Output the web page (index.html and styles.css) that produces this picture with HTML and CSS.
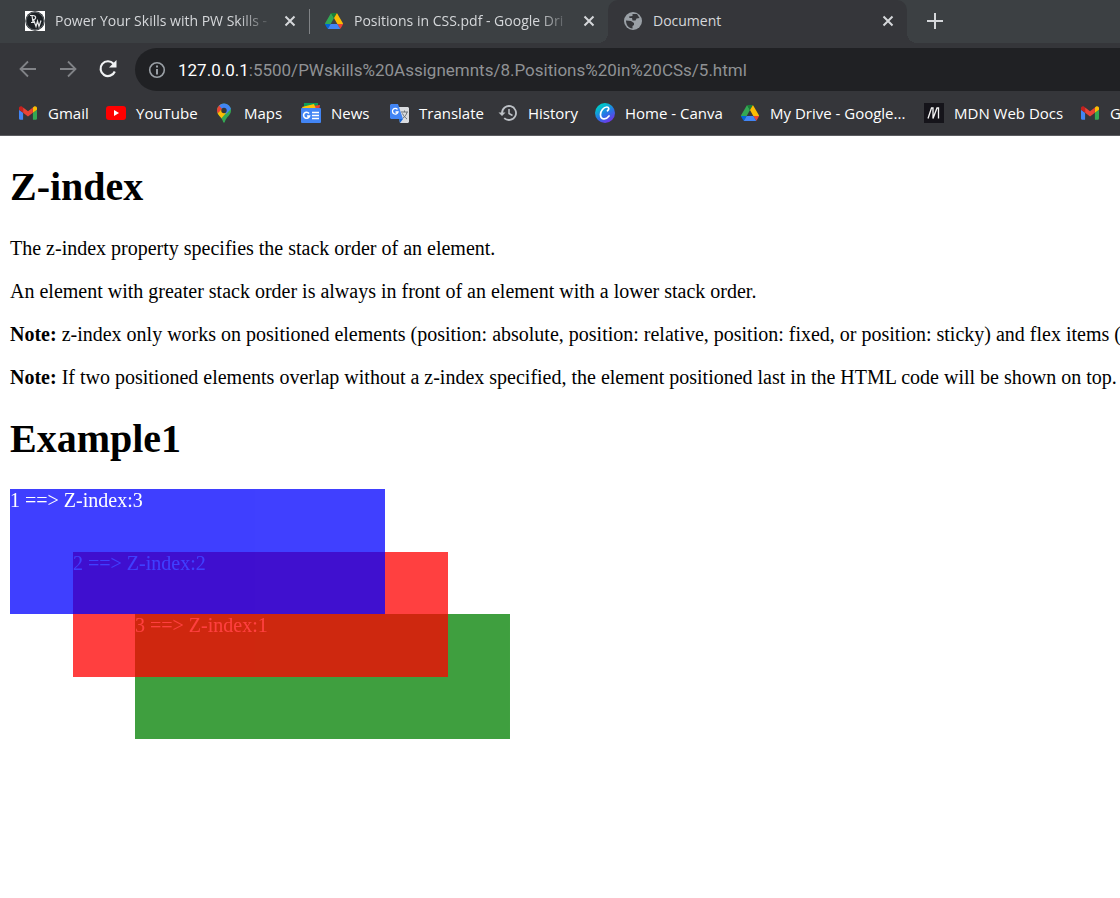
FILE: index.html
```html
<!DOCTYPE html>
<html lang="en">
<head>
<meta charset="utf-8">
<title>Document</title>
<link rel="stylesheet" href="styles.css">
</head>
<body>
<svg class="defs" aria-hidden="true">
  <symbol id="close" viewBox="0 0 12 12"><path d="M1.5 1.5l9 9M10.5 1.5l-9 9" fill="none" stroke="currentColor" stroke-width="2"/></symbol>
  <symbol id="drive" viewBox="0 0 87.3 78">
    <path d="M6.6 66.85l3.85 6.65c.8 1.4 1.95 2.5 3.3 3.3L27.5 53H0c0 1.55.4 3.1 1.2 4.5z" fill="#0066da"/>
    <path d="M43.65 25L29.9 1.2c-1.35.8-2.5 1.9-3.3 3.3L1.2 48.5A9.06 9.06 0 0 0 0 53h27.5z" fill="#34a853"/>
    <path d="M73.55 76.8c1.35-.8 2.5-1.9 3.3-3.3l1.6-2.75 7.65-13.25c.8-1.4 1.2-2.95 1.2-4.5H59.8l5.85 11.5z" fill="#ea4335"/>
    <path d="M43.65 25L57.4 1.2C56.05.4 54.5 0 52.9 0H34.4c-1.6 0-3.15.45-4.5 1.2z" fill="#188038"/>
    <path d="M59.8 53H27.5L13.75 76.8c1.35.8 2.9 1.2 4.5 1.2h50.8c1.6 0 3.15-.45 4.5-1.2z" fill="#4285f4"/>
    <path d="M73.4 26.5L60.7 4.5c-.8-1.4-1.95-2.5-3.3-3.3L43.65 25 59.8 53h27.45c0-1.55-.4-3.1-1.2-4.5z" fill="#fbbc04"/>
  </symbol>
  <symbol id="gmail" viewBox="52 42 88 66">
    <path d="M58 108h14V74L52 59v43c0 3.3 2.7 6 6 6" fill="#4285f4"/>
    <path d="M120 108h14c3.3 0 6-2.7 6-6V59l-20 15" fill="#34a853"/>
    <path d="M120 48v26l20-15v-8c0-7.4-8.5-11.7-14.4-7.2" fill="#fbbc04"/>
    <path d="M72 74V48l24 18 24-18v26L96 92" fill="#ea4335"/>
    <path d="M52 51v8l20 15V48l-5.6-4.2C60.5 39.4 52 43.600 52 51" fill="#c5221f"/>
  </symbol>
</svg>

<header class="browser">
  <nav class="tabs" aria-label="Tabs">
    <div class="tab">
      <svg class="icon" viewBox="0 0 20 20"><path d="M0 0h20v20H0z" fill="#fff"/><circle cx="10" cy="10" r="9.700" fill="#1b2024"/><circle cx="10" cy="10" r="8.800" fill="none" stroke="#8b9093" stroke-width=".6"/><path d="M5 4.500h3c3.500 0 3.500 4.500 0 4M7 4.500l1 7M6 11.500h3.500M8.500 8.500l2.500 7 1.500-5.500 1.500 5.500 2-6" fill="none" stroke="#e4e6e7" stroke-width="1.200"/></svg>
      <span class="tab-title faded">Power Your Skills with PW Skills -</span>
      <button class="close" aria-label="Close tab"><svg><use href="#close"/></svg></button>
    </div>
    <div class="tab divided">
      <svg class="icon drive-icon"><use href="#drive"/></svg>
      <span class="tab-title faded">Positions in CSS.pdf - Google Dri</span>
      <button class="close" aria-label="Close tab"><svg><use href="#close"/></svg></button>
    </div>
    <div class="tab active">
      <svg class="icon" viewBox="0 0 20 20"><circle cx="10" cy="10" r="9" fill="#9aa0a6"/><path d="M9.500 3H14l2.500 4-3 .5-1 2H9.500L9 7H6.500l-.5-1.500 3.500-.5zM3 9.500l5 .5 3 2v2l-1.500 1v2.500C5.500 17 3 14 3 9.500z" fill="#35363a"/></svg>
      <span class="tab-title">Document</span>
      <button class="close" aria-label="Close tab"><svg><use href="#close"/></svg></button>
    </div>
    <button class="new-tab" aria-label="New tab"><svg viewBox="0 0 16 16"><path d="M8 0v16M0 8h16" stroke="currentColor" stroke-width="2"/></svg></button>
  </nav>

  <div class="toolbar">
    <button class="nav-button" aria-label="Back"><svg viewBox="0 0 20 20"><path d="M18 10H3M10 2.500L2.500 10l7.500 7.500" fill="none" stroke="#818387" stroke-width="1.800"/></svg></button>
    <button class="nav-button" aria-label="Forward"><svg viewBox="0 0 20 20"><path d="M2 10h15M10 2.500l7.500 7.500-7.500 7.500" fill="none" stroke="#818387" stroke-width="1.800"/></svg></button>
    <button class="nav-button" aria-label="Reload"><svg viewBox="0 0 20 20"><path d="M16.800 12.500A7.400 7.400 0 1 1 15.500 4.700" fill="none" stroke="#f1f3f4" stroke-width="2.200"/><path d="M18.500 1v7.500H11z" fill="#f1f3f4"/></svg></button>
    <div class="address">
      <svg viewBox="0 0 18 18"><circle cx="9" cy="9" r="7.300" fill="none" stroke="#9aa0a6" stroke-width="1.600"/><path d="M9 4.500v2M9 8v5.500" stroke="#9aa0a6" stroke-width="2"/></svg>
      <span class="url"><span class="host">127.0.0.1</span>:5500/PWskills%20Assignemnts/8.Positions%20in%20CSs/5.html</span>
    </div>
  </div>

  <nav class="bookmarks" aria-label="Bookmarks">
    <a href="#"><svg class="icon gmail-icon"><use href="#gmail"/></svg>Gmail</a>
    <a href="#"><svg class="icon" viewBox="0 0 20 20"><rect y="3" width="20" height="14" rx="3" fill="#f00"/><path d="M8 7v6l5-3z" fill="#fff"/></svg>YouTube</a>
    <a href="#"><svg class="icon" viewBox="0 0 20 20"><clipPath id="pin"><path d="M10 .5a7 7 0 0 0-7 7c0 5 4.500 5.500 6.200 11.500.3 1 1.300 1 1.600 0C12.500 13 17 12.500 17 7.500a7 7 0 0 0-7-7z"/></clipPath><g clip-path="url(#pin)"><path d="M0 0h20v20H0z" fill="#34a853"/><path d="M0 14L8 5l5 4-8 9z" fill="#fbbc04"/><path d="M0 0h6L9 5l-5 5H0z" fill="#ea4335"/><path d="M5 2.500L8 0h12v3l-8 8-3-4z" fill="#4285f4"/></g><circle cx="10" cy="7.500" r="2.700" fill="#35363a"/></svg>Maps</a>
    <a href="#"><svg class="icon" viewBox="0 0 20 20"><path d="M3 0h14v7H3z" fill="#0c9d58"/><path d="M12 3l7-1-1 6h-7z" fill="#ea4335"/><path d="M1 4l12-3 2 5H2z" fill="#ffc107"/><rect y="5" width="20" height="15" rx="1" fill="#4285f4"/><path d="M8 10.500a3 3 0 1 0 .5 2.500H6M11 9.500h7M11 12.500h7M11 15.500h7" fill="none" stroke="#fff" stroke-width="1.600"/></svg>News</a>
    <a href="#"><svg class="icon" viewBox="0 0 20 20"><path d="M8 4h11l1 1v14l-1 1h-8z" fill="#dadce0"/><path d="M12 9h7M15.500 7.500V9M18 9c-.5 3-2.500 5-4.500 6.500M13.500 10.500c1 2.500 3 4.500 4.500 5.500" fill="none" stroke="#6b7379"/><path d="M2 1h7l5 15H2l-1-1V2z" fill="#4285f4"/><path d="M10 16h4l-3 4z" fill="#1967d2"/><path d="M8.500 6.500A2.800 2.800 0 1 0 9 9H6.500" fill="none" stroke="#fff" stroke-width="1.300"/></svg>Translate</a>
    <a href="#"><svg class="icon" viewBox="0 0 20 20"><path d="M4 10a7 7 0 1 1 2.200 5.100" fill="none" stroke="#bdc1c6" stroke-width="1.800"/><path d="M.5 9.500h7L4 13z" fill="#bdc1c6"/><path d="M11 6v4.500l3.500 2" fill="none" stroke="#bdc1c6" stroke-width="1.500"/></svg>History</a>
    <a href="#"><svg class="icon" viewBox="0 0 20 20"><defs><linearGradient id="canva" x1=".2" y1="0" x2=".8" y2="1"><stop offset=".15" stop-color="#00c4cc"/><stop offset=".55" stop-color="#2874e6"/><stop offset="1" stop-color="#7d2ae8"/></linearGradient></defs><circle cx="10" cy="10" r="10" fill="url(#canva)"/><path d="M12.500 7.800c2-1.500 1.500-3.800-.6-3.800C8.500 4 5.500 8 5.500 11.500c0 5.500 5.500 5.500 8.500 1.500" fill="none" stroke="#fff" stroke-width="1.700" stroke-linecap="round"/></svg>Home - Canva</a>
    <a href="#"><svg class="icon drive-icon"><use href="#drive"/></svg>My Drive - Google...</a>
    <a href="#"><svg class="icon" viewBox="0 0 20 20"><path d="M0 0h20v20H0z" fill="#15141a"/><path d="M4 15.500L7.500 5h1.500v10.500L13 5h1.500v10.500" fill="none" stroke="#f4f4f4" stroke-width="1.300"/></svg>MDN Web Docs</a>
    <a href="#"><svg class="icon gmail-icon"><use href="#gmail"/></svg>G</a>
  </nav>
</header>

<main class="page">
  <h1>Z-index</h1>
  <p>The z-index property specifies the stack order of an element.</p>
  <p>An element with greater stack order is always in front of an element with a lower stack order.</p>
  <p><b>Note:</b> z-index only works on positioned elements (position: absolute, position: relative, position: fixed, or position: sticky) and flex items (</p>
  <p><b>Note:</b> If two positioned elements overlap without a z-index specified, the element positioned last in the HTML code will be shown on top.</p>
  <h1>Example1</h1>
  <div class="stack">
    <div class="box blue">1 ==&gt; Z-index:3</div>
    <div class="box red">2 ==&gt; Z-index:2</div>
    <div class="box green">3 ==&gt; Z-index:1</div>
  </div>
</main>
</body>
</html>
```
FILE: styles.css
```css
* { box-sizing: border-box; }

body {
  margin: 0;
  background: #fff;
  color: #000;
  font: 20px/23px "Liberation Serif", "Times New Roman", serif;
  overflow-x: hidden;
}

button {
  padding: 0;
  border: 0;
  background: none;
  color: inherit;
  display: grid;
  place-items: center;
}

.defs { display: none; }

.browser {
  background: #35363a;
  border-bottom: 1px solid #5b5c60;
  color: #fff;
  font: 15px/20px "Open Sans", "Noto Sans", sans-serif;
  overflow: hidden;
}

.icon { width: 20px; height: 20px; flex: none; }
.drive-icon, .gmail-icon { padding: 1px; }

.tabs {
  display: flex;
  height: 43px;
  padding-left: 10px;
  background: #3c4043;
  color: #d5d7da;
  font-size: 14px;
}

.tab {
  position: relative;
  display: flex;
  align-items: center;
  flex: none;
  width: 299px;
  padding: 0 12px 1px 15px;
}

.divided::before {
  content: "";
  position: absolute;
  left: 0;
  top: 9px;
  width: 1px;
  height: 25px;
  background: #808386;
}

.tab-title {
  flex: 1;
  margin: 0 10px;
  white-space: nowrap;
  overflow: hidden;
}

.faded {
  mask-image: linear-gradient(to right, #000 84%, transparent);
}

.close { width: 14px; height: 20px; }
.close svg { width: 12px; height: 12px; }

.active {
  background: #35363a;
  border-radius: 10px 10px 0 0;
}

.active::before,
.active::after {
  content: "";
  position: absolute;
  bottom: 0;
  width: 10px;
  height: 10px;
}

.active::before {
  right: 100%;
  background: radial-gradient(circle at 0 0, transparent 10px, #35363a 10px);
}

.active::after {
  left: 100%;
  background: radial-gradient(circle at 100% 0, transparent 10px, #35363a 10px);
}

.new-tab { width: 56px; height: 42px; }
.new-tab svg { width: 16px; height: 16px; }

.toolbar {
  display: flex;
  align-items: center;
  gap: 20px;
  padding: 5px 0 0 18px;
}

.nav-button svg { width: 20px; height: 20px; display: block; }
.nav-button { margin-bottom: 2px; }

.address {
  flex: 1;
  display: flex;
  align-items: center;
  gap: 12px;
  height: 43px;
  margin-left: -3px;
  padding-left: 13px;
  border-radius: 22px 0 0 22px;
  background: #202124;
  color: #8f9194;
  font-family: Roboto, "Open Sans", sans-serif;
  font-size: 17px;
}

.address svg { width: 18px; height: 18px; flex: none; }
.url { white-space: nowrap; }
.host { color: #fff; }

.bookmarks {
  display: grid;
  grid-template-columns: 88px 108px 87px 88px 109px 97px 145px 184px 156px 1fr;
  align-items: center;
  height: 44px;
  padding-left: 18px;
}

.bookmarks a {
  display: flex;
  align-items: center;
  gap: 10px;
  color: #fff;
  text-decoration: none;
  white-space: nowrap;
}

.page {
  padding: 1px 10px 0;
  display: flow-root;
  white-space: nowrap;
}

h1 {
  margin: 27px 0;
  font-size: 40px;
  line-height: 46px;
}

p { margin: 20px 0; }

.stack { position: relative; }

.box {
  position: relative;
  width: 375px;
  height: 125px;
  color: #fff;
  opacity: 0.75;
}

.blue { z-index: 3; background: blue; }

.red {
  z-index: 2;
  margin: -62px 0 0 63px;
  background: red;
}

.green {
  z-index: 1;
  margin: -63px 0 0 125px;
  background: green;
}
```
